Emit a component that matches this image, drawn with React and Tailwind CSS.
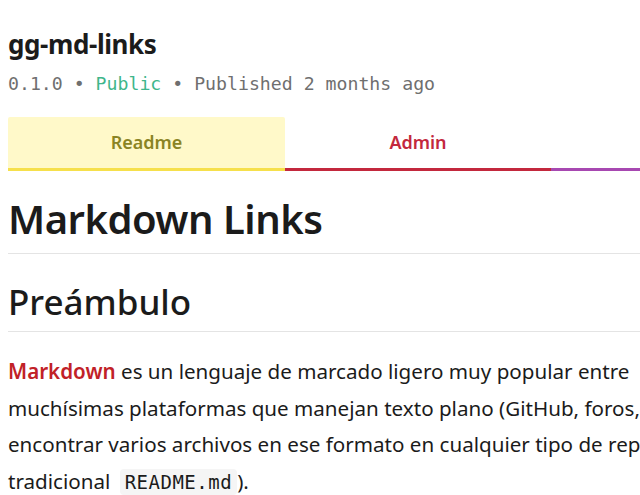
import React from 'react';

const sans = { fontFamily: '"Noto Sans", "Open Sans", sans-serif' };
const mono = { fontFamily: '"DejaVu Sans Mono", "Liberation Mono", monospace' };

export default function App() {
  return (
    <div className="w-[640px] h-[495px] overflow-hidden bg-white text-[#1b1b1b]" style={sans}>
      <div className="w-[900px] pl-2">
        {/* Package header */}
        <div className="pt-[27px]">
          <h1 className="text-[26px] font-bold leading-[34px] tracking-[-0.4px]">gg-md-links</h1>
          <div className="text-[18.2px] leading-[26px] text-[#6f6f6f] mt-[10px]" style={mono}>
            0.1.0 • <span className="text-[#3fb68b]">Public</span> • Published 2 months ago
          </div>
        </div>

        {/* Tabs */}
        <div className="flex mt-[20px]">
          <div className="w-[277px] h-[54px] flex items-center justify-center bg-[#fff9c9] border-b-[3px] border-[#f6e04b] rounded-t-[2px]">
            <span className="text-[18px] font-semibold text-[#8a8424]">Readme</span>
          </div>
          <div className="w-[266px] h-[54px] flex items-center justify-center border-b-[3px] border-[#c3283d]">
            <span className="text-[18px] font-semibold text-[#c3283d]">Admin</span>
          </div>
          <div className="w-[266px] h-[54px] border-b-[3px] border-[#a748b1]" />
        </div>

        {/* Readme body */}
        <div className="pt-[22px]">
          <h1 className="text-[40px] font-semibold leading-[52px] pb-[8px] border-b border-[#e4e4e4] tracking-[-0.5px]">Markdown Links</h1>
          <h2 className="text-[35px] font-medium leading-[42px] mt-[27px] pb-[8px] border-b border-[#e4e4e4]">Preámbulo</h2>
          <p className="text-[20.6px] leading-[36.5px] mt-[21px] whitespace-nowrap">
            <a className="text-[#c12127] font-semibold">Markdown</a> es un lenguaje de marcado ligero muy popular entre
            <br />
            muchísimas plataformas que manejan texto plano (GitHub, foros, blogs, ...) y es muy común
            <br />
            encontrar varios archivos en ese formato en cualquier tipo de repositorio (empezando por el
            <br />
            tradicional <code className="ml-[4px] text-[19px] tracking-[0.5px] bg-[#f5f5f5] px-[5px] py-[2px] rounded" style={mono}>README.md</code>).
          </p>
        </div>
      </div>
    </div>
  );
}
